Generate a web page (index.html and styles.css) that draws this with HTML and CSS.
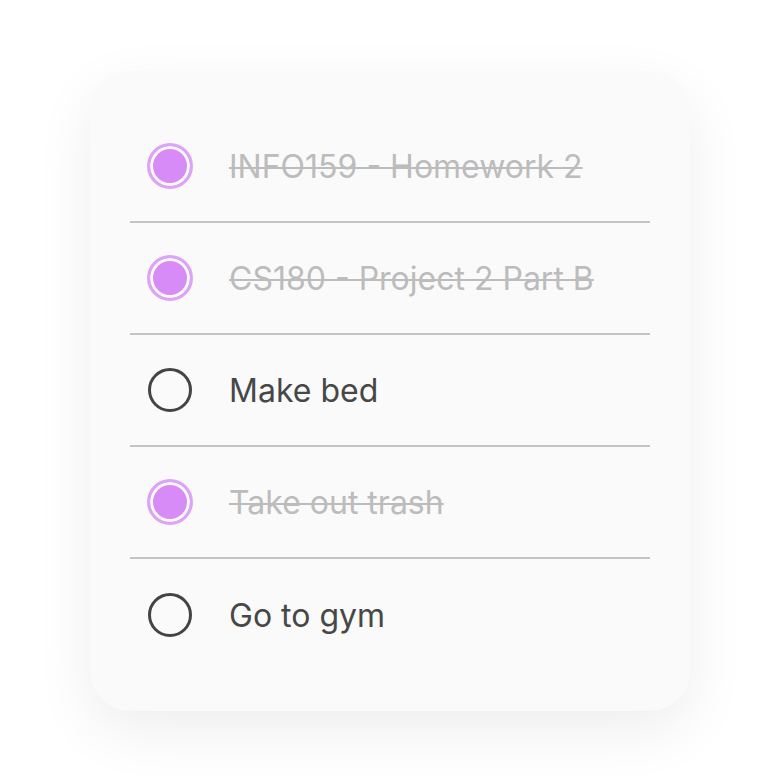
FILE: index.html
```html
<!DOCTYPE html>
<html>
<head>
<meta charset="utf-8">
<link rel="stylesheet" href="styles.css">
</head>
<body>
<div class="card">
  <ul class="list">
    <li class="item done"><span class="check"></span><span class="label">INFO159 - Homework 2</span></li>
    <li class="item done"><span class="check"></span><span class="label">CS180 - Project 2 Part B</span></li>
    <li class="item"><span class="check"></span><span class="label">Make bed</span></li>
    <li class="item done"><span class="check"></span><span class="label">Take out trash</span></li>
    <li class="item"><span class="check"></span><span class="label">Go to gym</span></li>
  </ul>
</div>
</body>
</html>
```
FILE: styles.css
```css
html, body {
  margin: 0;
  padding: 0;
  background: #ffffff;
}
body {
  width: 780px;
  height: 780px;
  display: flex;
  justify-content: center;
  padding-top: 71px;
  box-sizing: border-box;
  font-family: Inter, "Noto Sans", sans-serif;
}
.card {
  width: 600px;
  height: 640px;
  box-sizing: border-box;
  padding: 40px;
  background: #fafafa;
  border-radius: 40px;
  box-shadow: 0 20px 60px rgba(0, 0, 0, 0.07);
}
.list {
  list-style: none;
  margin: 0;
  padding: 0;
}
.item {
  height: 112px;
  box-sizing: border-box;
  display: flex;
  align-items: center;
  padding-left: 18px;
  gap: 37px;
  border-bottom: 2px solid #c4c4c4;
}
.item:last-child {
  border-bottom: none;
}
.check {
  width: 44px;
  height: 44px;
  box-sizing: border-box;
  border-radius: 50%;
  border: 3px solid #444444;
  flex: none;
}
.done .check {
  width: 46px;
  height: 46px;
  margin-left: -1px;
  margin-right: -1px;
  border: 3px solid #dda2f9;
  background: #d68bf7;
  box-shadow: inset 0 0 0 3px #fafafa;
}
.label {
  font-size: 32px;
  color: #474747;
}
.done .label {
  color: #bcbcbc;
  text-decoration: line-through;
  text-decoration-thickness: 2px;
}
```
